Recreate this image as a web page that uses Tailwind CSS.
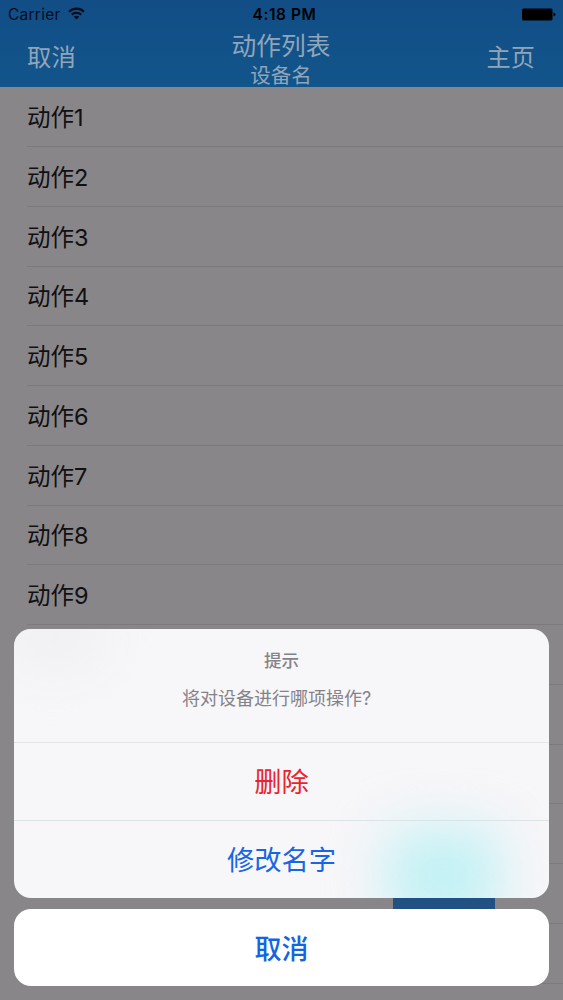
<!DOCTYPE html>
<html lang="zh">
<head>
<meta charset="utf-8">
<title>动作列表</title>
<script src="https://cdn.jsdelivr.net/npm/@tailwindcss/browser@4"></script>
</head>
<body class="font-['Inter','Noto_Sans_CJK_SC',sans-serif]">
<div class="relative w-[563px] h-[1000px] overflow-hidden bg-[#888688]">
  <header class="h-[87.4px] bg-linear-to-b from-[#124d86] to-[#11558b] flex flex-col">
    <div class="h-7 grid grid-cols-3 items-center pl-2 pr-[7px] text-[#050d1c]">
      <div class="flex items-center gap-[7px]">
        <span class="text-[15.5px] leading-5 pt-[2px] tracking-[0.25px]">Carrier</span>
        <svg class="w-[17px] h-[13px] -mt-[2px]" viewBox="0 0 17 13" fill="none" stroke="currentColor" stroke-width="2.2"><path d="M1 4.7C5.2 .6 11.8 .6 16 4.7M3.8 7.6C6.4 5.1 10.6 5.1 13.2 7.6"/><path d="M8.5 12.5L5.8 9.8Q8.5 7.6 11.2 9.8Z" fill="currentColor" stroke="none"/></svg>
      </div>
      <div class="text-center text-[15.5px] leading-5 pt-[2px] tracking-[0.55px] font-semibold text-black whitespace-nowrap pl-[5px]">4:18 PM</div>
      <svg class="w-[34px] h-[13px] justify-self-end" viewBox="0 0 34 13" fill="#000"><rect x="0" y="0.5" width="30.5" height="12" rx="1.5"/><path d="M31.5 4.5Q33.5 5 33.5 6.5T31.5 8.5Z"/></svg>
    </div>
    <div class="flex-1 grid grid-cols-3 pl-[27px] pr-[28px] text-[#91a5b8]">
      <div class="text-[24.4px] leading-[59px]">取消</div>
      <div class="flex flex-col items-center">
        <div class="text-[24.7px] leading-[36px] whitespace-nowrap">动作列表</div>
        <div class="text-[20.5px] leading-[23px]">设备名</div>
      </div>
      <div class="text-[24.2px] leading-[59px] text-right">主页</div>
    </div>
  </header>
  <main class="pl-[27px] text-[23.5px] text-[#111012]">
    <div class="h-[59.75px] border-b border-[#7c7a7d] flex items-center pt-[2px]">动作1</div>
    <div class="h-[59.75px] border-b border-[#7c7a7d] flex items-center pt-[2px]">动作2</div>
    <div class="h-[59.75px] border-b border-[#7c7a7d] flex items-center pt-[2px]">动作3</div>
    <div class="h-[59.75px] border-b border-[#7c7a7d] flex items-center pt-[2px]">动作4</div>
    <div class="h-[59.75px] border-b border-[#7c7a7d] flex items-center pt-[2px]">动作5</div>
    <div class="h-[59.75px] border-b border-[#7c7a7d] flex items-center pt-[2px]">动作6</div>
    <div class="h-[59.75px] border-b border-[#7c7a7d] flex items-center pt-[2px]">动作7</div>
    <div class="h-[59.75px] border-b border-[#7c7a7d] flex items-center pt-[2px]">动作8</div>
    <div class="h-[59.75px] border-b border-[#7c7a7d] flex items-center pt-[2px]">动作9</div>
    <div class="h-[59.75px] border-b border-[#7c7a7d]"></div>
    <div class="h-[59.75px] border-b border-[#7c7a7d]"></div>
    <div class="h-[59.75px] border-b border-[#7c7a7d]"></div>
    <div class="h-[59.75px] border-b border-[#7c7a7d]"></div>
    <div class="h-[59.75px] border-b border-[#7c7a7d]"></div>
    <div class="h-[59.75px] border-b border-[#7c7a7d]"></div>
  </main>
  <div class="absolute left-[393px] top-[860px] w-[102px] h-[80px] bg-[#215183]"></div>
  <div class="absolute inset-x-[14px] bottom-[14px] flex flex-col gap-[11px] text-center">
    <section class="relative h-[269px] rounded-[17px] overflow-hidden bg-[#f7f6f9]">
      <div class="absolute -left-[10px] -top-[20px] w-[100px] h-[60px] rounded-full bg-[#f0eff2] blur-xl"></div>
      <div class="absolute left-[373px] top-[200px] w-[112px] h-[95px] rounded-[20px] bg-[#c2f1f4] blur-[26px]"></div>
      <div class="relative flex flex-col">
        <div class="h-[114px] border-b border-[#dcdfe2]/75 text-[#858388] pt-[19px]">
          <div class="text-[17.5px] leading-[26px] font-medium">提示</div>
          <div class="text-[18px] leading-[26px] mt-[12px] pr-[10px]">将对设备进行哪项操作?</div>
        </div>
        <div class="h-[78px] border-b border-[#d4dee2]/75 flex items-center justify-center pt-[4px] text-[27.3px] text-[#e9242c]">删除</div>
        <div class="h-[77px] flex items-center justify-center pt-[4px] text-[27.3px] text-[#1766e5]">修改名字</div>
      </div>
    </section>
    <section class="h-[77px] rounded-[17px] bg-white flex items-center justify-center pt-[5px] text-[27px] font-medium text-[#1264e2]">取消</section>
  </div>
</div>
</body>
</html>
